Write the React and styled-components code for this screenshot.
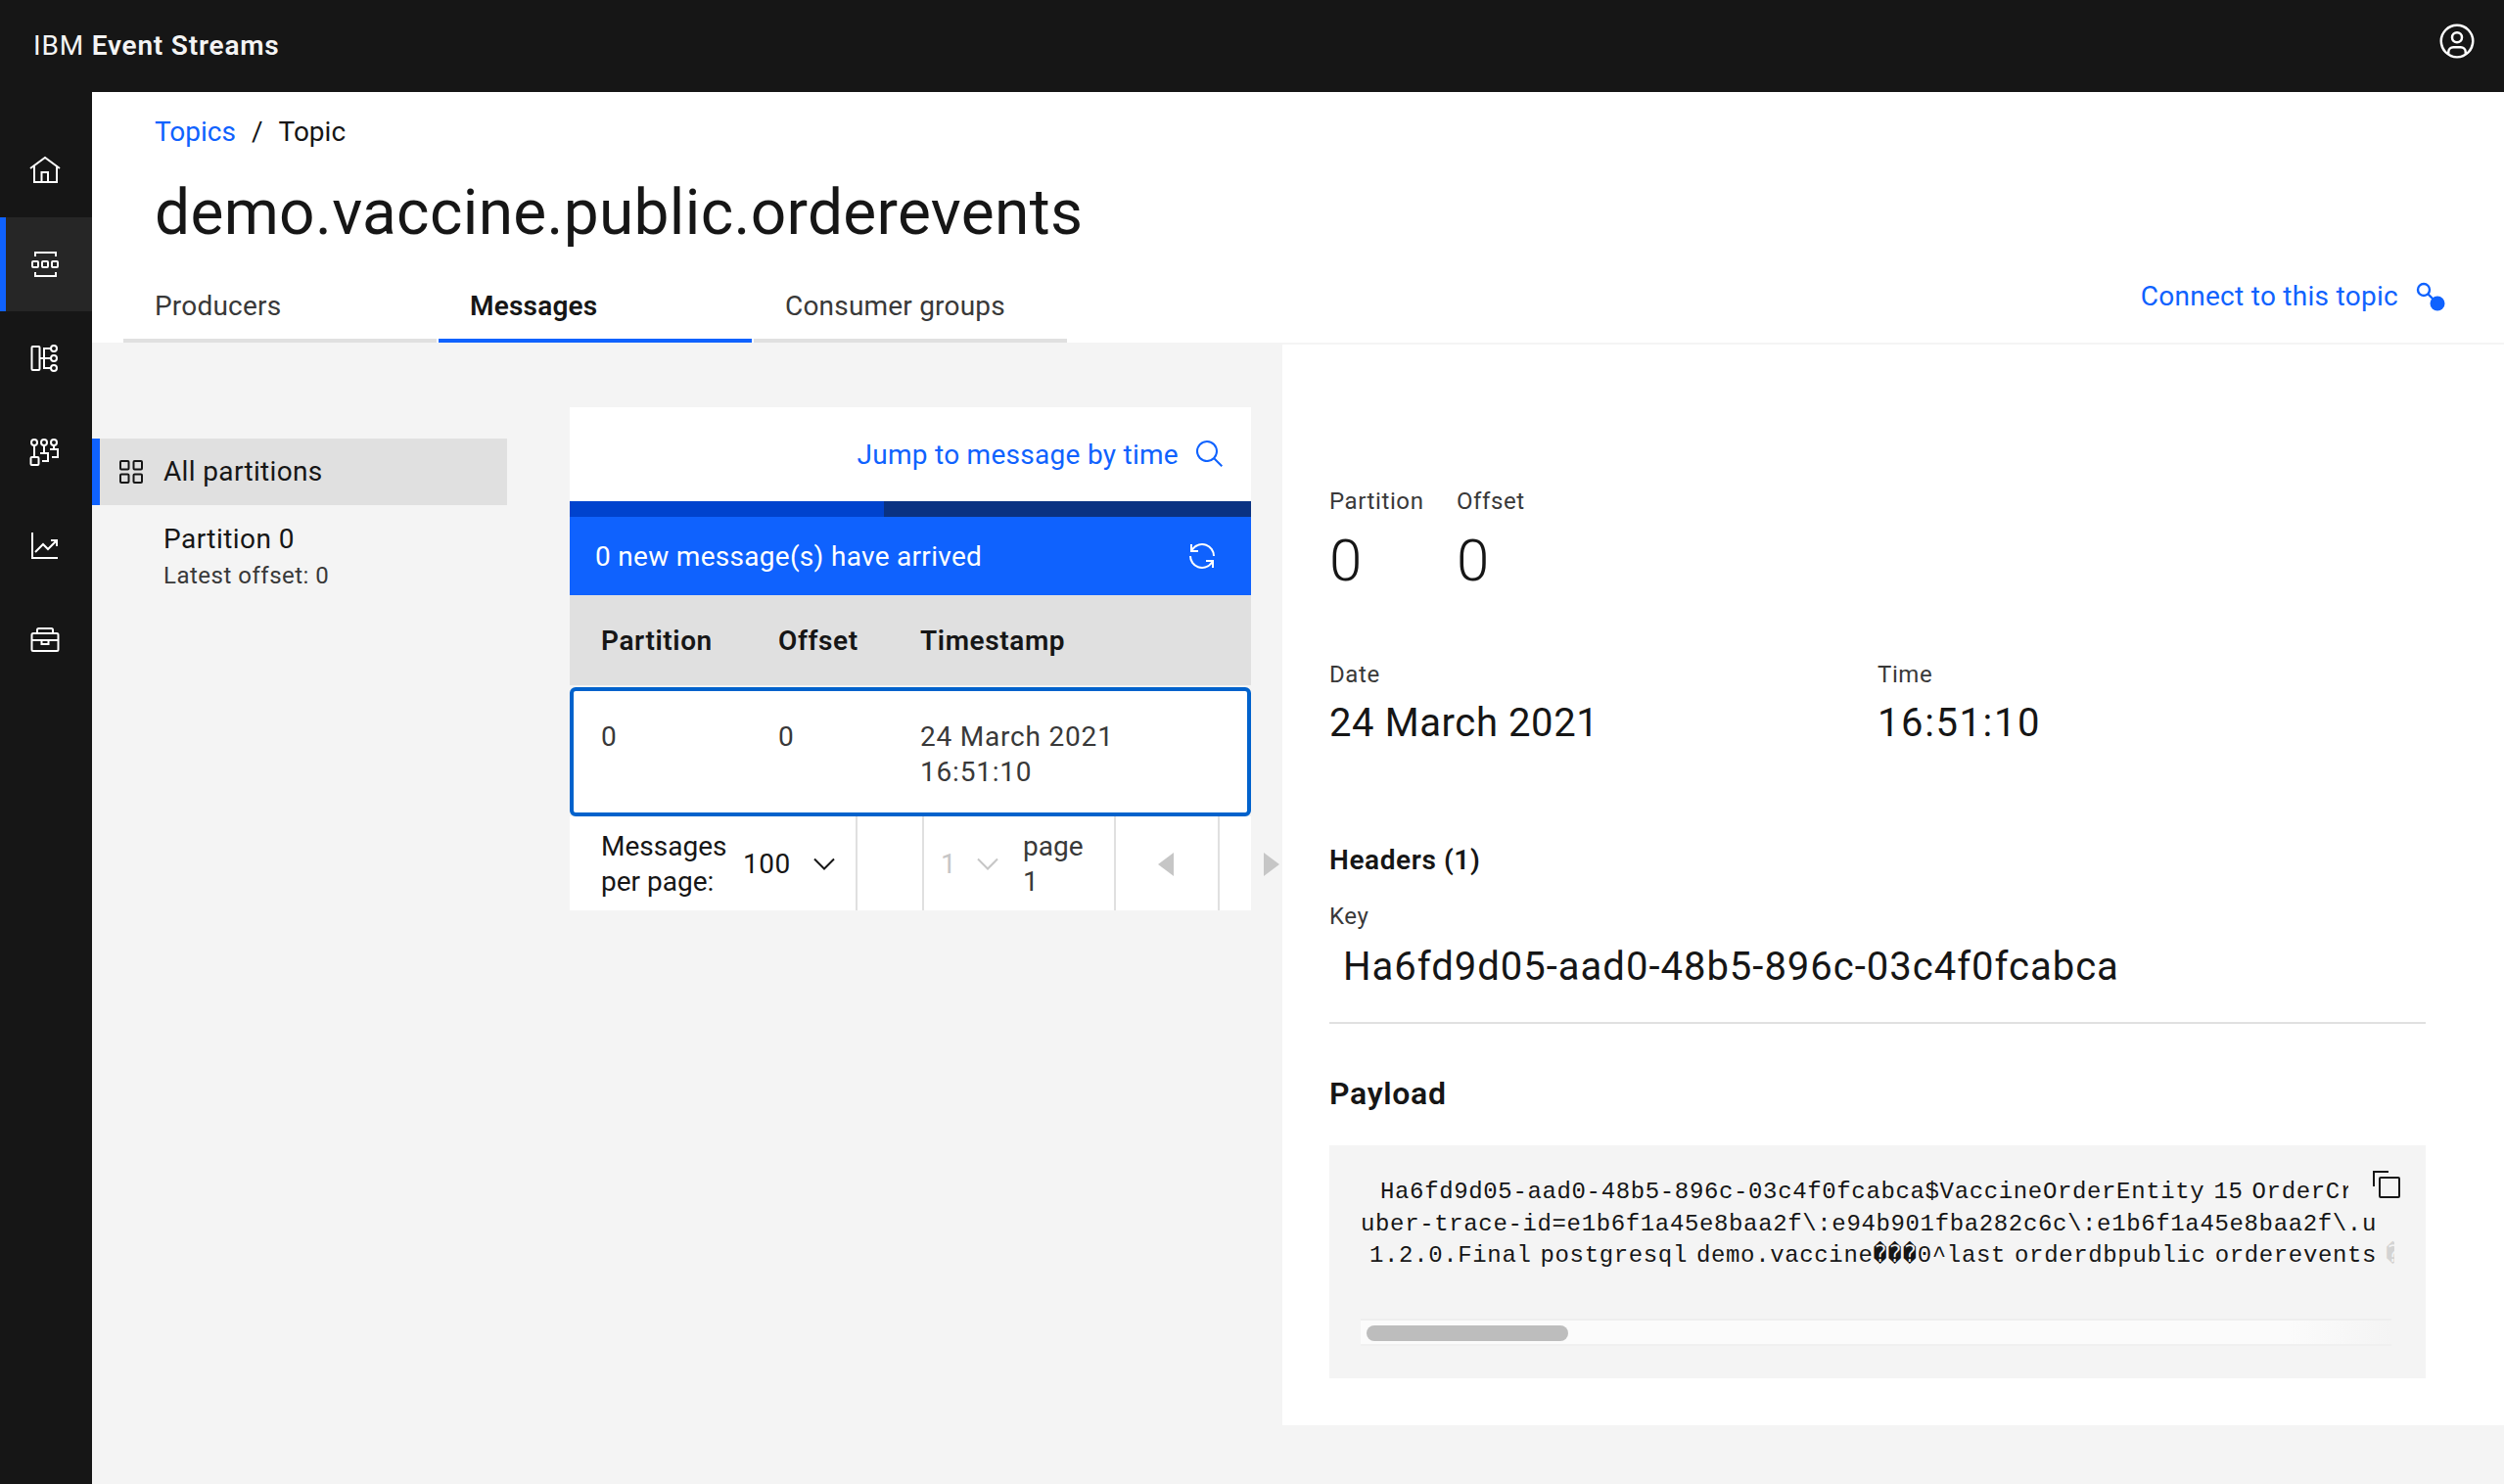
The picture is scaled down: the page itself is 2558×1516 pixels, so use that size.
import React from "react";
import styled, { createGlobalStyle } from "styled-components";

const Global = createGlobalStyle`
  html, body { margin: 0; padding: 0; background: #f4f4f4; }
  body { font-family: Roboto, "Noto Sans", sans-serif; color: #161616; overflow: hidden; }
  * { box-sizing: border-box; }
`;

const Page = styled.div`
  width: 2558px;
  height: 1516px;
  display: flex;
  flex-direction: column;
  overflow: hidden;
`;
const Header = styled.header`
  height: 94px;
  flex: none;
  background: #161616;
  color: #f4f4f4;
  display: flex;
  align-items: center;
  justify-content: space-between;
  padding: 0 28px 0 34px;
`;
const Brand = styled.div`
  font-size: 28px;
  line-height: 36px;
  letter-spacing: 0.8px;
  span { font-weight: 600; }
`;
const UserIcon = styled.svg`
  margin-bottom: 10px;
`;
const Body = styled.div`
  flex: 1;
  display: flex;
  min-height: 0;
`;
const SideNav = styled.nav`
  width: 94px;
  flex: none;
  background: #161616;
  padding-top: 32px;
`;
const NavItem = styled.div`
  height: 96px;
  display: flex;
  align-items: center;
  justify-content: center;
  color: #fff;
  background: ${(p) => (p.$active ? "#262626" : "transparent")};
  border-left: 6px solid ${(p) => (p.$active ? "#0f62fe" : "transparent")};
  padding-right: 8px;
`;
const Main = styled.main`
  flex: 1;
  min-width: 0;
  display: flex;
  flex-direction: column;
`;
const TitleArea = styled.section`
  height: 256px;
  flex: none;
  background: #fff;
  display: flex;
  flex-direction: column;
`;
const Breadcrumb = styled.div`
  margin: 23px 0 0 64px;
  font-size: 28px;
  line-height: 36px;
  display: flex;
  gap: 16px;
`;
const Crumb = styled.span`
  color: ${(p) => (p.$link ? "#0f62fe" : "#161616")};
`;
const Title = styled.h1`
  margin: 27px 0 0 64px;
  font-size: 64px;
  line-height: 76px;
  font-weight: 400;
  letter-spacing: 0.32px;
  color: #161616;
`;
const TabRow = styled.div`
  margin-top: auto;
  display: flex;
  justify-content: space-between;
  padding-left: 32px;
  padding-right: 60px;
`;
const Tabs = styled.div`
  display: flex;
  gap: 2px;
`;
const Tab = styled.div`
  width: ${(p) => p.$width}px;
  height: 70px;
  padding: 15px 0 0 32px;
  font-size: 28px;
  line-height: 36px;
  letter-spacing: 0.2px;
  font-weight: ${(p) => (p.$active ? 600 : 400)};
  color: ${(p) => (p.$active ? "#161616" : "#393939")};
  border-bottom: 4px solid ${(p) => (p.$active ? "#0f62fe" : "#e0e0e0")};
`;
const ConnectLink = styled.div`
  display: flex;
  align-items: center;
  gap: 18px;
  height: 36px;
  margin-top: 5px;
  color: #0f62fe;
  font-size: 28px;
  line-height: 36px;
  letter-spacing: 0.28px;
`;
const Content = styled.div`
  flex: 1;
  min-height: 0;
  display: flex;
  align-items: flex-start;
`;
const Partitions = styled.aside`
  width: 424px;
  flex: none;
  padding-top: 98px;
`;
const PartitionAll = styled.div`
  height: 68px;
  background: #e0e0e0;
  border-left: 8px solid #0f62fe;
  display: flex;
  align-items: center;
  gap: 21px;
  padding-left: 20px;
  font-size: 28px;
  line-height: 36px;
  letter-spacing: 0.35px;
`;
const PartitionItem = styled.div`
  padding: 17px 0 0 73px;
`;
const PartitionName = styled.div`
  font-size: 28px;
  line-height: 36px;
  letter-spacing: 0.45px;
`;
const PartitionMeta = styled.div`
  margin-top: 3px;
  font-size: 24px;
  line-height: 32px;
  letter-spacing: 0.5px;
  color: #393939;
`;
const Messages = styled.section`
  width: 696px;
  flex: none;
  margin: 66px 32px 0 64px;
`;
const JumpRow = styled.div`
  height: 96px;
  background: #fff;
  display: flex;
  align-items: center;
  justify-content: flex-end;
  gap: 16px;
  padding-right: 26px;
  color: #0f62fe;
  font-size: 28px;
  letter-spacing: 0.28px;
`;
const Progress = styled.div`
  height: 16px;
  display: flex;
`;
const ProgressPart = styled.div`
  width: ${(p) => p.$width}px;
  background: ${(p) => p.$color};
`;
const Banner = styled.div`
  height: 80px;
  background: #0f62fe;
  color: #fff;
  display: flex;
  align-items: center;
  justify-content: space-between;
  padding: 0 34px 0 26px;
  font-size: 28px;
  letter-spacing: 0.3px;
`;
const Row = styled.div`
  display: grid;
  grid-template-columns: 181px 145px 1fr;
  padding-left: 32px;
`;
const HeadRow = styled(Row)`
  height: 92px;
  background: #e0e0e0;
  align-items: center;
  font-size: 28px;
  font-weight: 600;
  letter-spacing: 0.6px;
  color: #161616;
`;
const SelectedRow = styled(Row)`
  height: 132px;
  margin-top: 2px;
  background: #fff;
  border: 4px solid #0062cc;
  border-radius: 6px;
  padding: 29px 0 0 28px;
  font-size: 28px;
  line-height: 36px;
  letter-spacing: 0.8px;
  color: #393939;
`;
const Pager = styled.div`
  height: 96px;
  display: flex;
  background: #fff;
  font-size: 28px;
  line-height: 36px;
`;
const PagerCell = styled.div`
  flex: none;
  width: ${(p) => p.$width}px;
  display: flex;
  align-items: center;
  border-right: ${(p) => (p.$last ? "0" : "2px solid #e0e0e0")};
  padding: 2px ${(p) => p.$padRight || 0}px 0 ${(p) => p.$pad || 0}px;
  justify-content: ${(p) => (p.$center ? "center" : "flex-start")};
`;
const PagerLabel = styled.div`
  width: ${(p) => p.$width}px;
  flex: none;
  margin-left: ${(p) => p.$gap || 0}px;
  color: ${(p) => p.$color || "#161616"};
`;
const PagerValue = styled.div`
  width: ${(p) => p.$width}px;
  flex: none;
  letter-spacing: 0.5px;
  color: ${(p) => (p.$disabled ? "#c6c6c6" : "#161616")};
`;
const Detail = styled.section`
  flex: none;
  width: 1248px;
  margin-top: 2px;
  height: 1104px;
  background: #fff;
  padding: 144px 80px 48px 48px;
`;
const FieldRow = styled.div`
  display: flex;
  margin-top: ${(p) => p.$top || 0}px;
`;
const Field = styled.div`
  width: ${(p) => p.$width}px;
  flex: none;
`;
const Label = styled.div`
  font-size: 24px;
  line-height: 32px;
  letter-spacing: 0.6px;
  color: #393939;
  margin-top: ${(p) => p.$top || 0}px;
`;
const BigValue = styled.div`
  margin-top: 9px;
  font-size: 60px;
  line-height: 72px;
  font-weight: 300;
  color: #161616;
`;
const Value = styled.div`
  margin-top: ${(p) => p.$gap}px;
  font-size: 40px;
  line-height: 52px;
  letter-spacing: ${(p) => p.$spacing}px;
  color: #161616;
  padding-left: ${(p) => p.$indent || 0}px;
`;
const SectionHead = styled.h3`
  margin: ${(p) => p.$top}px 0 0;
  font-size: 28px;
  line-height: 36px;
  font-weight: 600;
  letter-spacing: 0.6px;
  color: #161616;
`;
const Divider = styled.hr`
  margin: 30px 0 0;
  border: 0;
  height: 2px;
  background: #e0e0e0;
`;
const PayloadHead = styled.h2`
  margin: 49px 0 0;
  font-size: 32px;
  line-height: 44px;
  font-weight: 600;
  letter-spacing: 0.7px;
  color: #161616;
`;
const CodeBlock = styled.div`
  position: relative;
  margin-top: 31px;
  height: 238px;
  background: #f4f4f4;
  padding-top: 32px;
  font-family: "Liberation Mono", "DejaVu Sans Mono", monospace;
  font-size: 24px;
  line-height: 32.5px;
  letter-spacing: 0.64px;
  word-spacing: -6px;
  color: #161616;
`;
const CodeLine = styled.div`
  margin-left: ${(p) => p.$left}px;
  width: ${(p) => p.$width}px;
  height: 32.5px;
  overflow: hidden;
  white-space: pre;
`;
const FadedGlyph = styled.span`
  color: #c6c6c6;
  opacity: 0.7;
`;
const CopyButton = styled.div`
  position: absolute;
  top: 26px;
  right: 26px;
  width: 28px;
  height: 28px;
  line-height: 0;
`;
const ScrollTrack = styled.div`
  margin: 47.5px 0 0 32px;
  width: 1053px;
  height: 28px;
  background: linear-gradient(90deg, #fbfbfb 90%, #f4f4f4 100%);
  border-top: 2px solid #eeeeee;
  border-bottom: 2px solid #f0f0f0;
  padding: 5px 0 0 6px;
`;
const ScrollThumb = styled.div`
  width: 206px;
  height: 16px;
  border-radius: 8px;
  background: #bdbdbd;
`;

const Icon = ({ size = 32, vb = 32, children, ...rest }) => (
  <svg width={size} height={size} viewBox={`0 0 ${vb} ${vb}`} fill="none" stroke="currentColor" strokeWidth="2" {...rest}>
    {children}
  </svg>
);

const Chevron = ({ color }) => (
  <svg width="22" height="14" viewBox="0 0 22 14" fill="none" stroke={color} strokeWidth="2" style={{ flex: "none" }}>
    <path d="M1 1.5l10 10 10-10" />
  </svg>
);

const Triangle = ({ dir }) => (
  <svg width="16" height="24" viewBox="0 0 16 24" fill="#c6c6c6">
    <path d={dir === "left" ? "M16 0v24L0 12z" : "M0 0v24l16-12z"} />
  </svg>
);

export default function App() {
  return (
    <Page>
      <Global />
      <Header>
        <Brand>
          IBM <span>Event Streams</span>
        </Brand>
        <UserIcon width="40" height="40" viewBox="0 0 32 32" fill="#fff">
          <path d="M16 8a5 5 0 1 0 5 5 5 5 0 0 0-5-5zm0 8a3 3 0 1 1 3-3 3 3 0 0 1-3 3z" />
          <path d="M16 2a14 14 0 1 0 14 14A14 14 0 0 0 16 2zm-6 24.377V25a3 3 0 0 1 3-3h6a3 3 0 0 1 3 3v1.377a11.899 11.899 0 0 1-12 0zm13.992-1.451A5.002 5.002 0 0 0 19 20h-6a5.002 5.002 0 0 0-4.992 4.926 12 12 0 1 1 15.985 0z" />
        </UserIcon>
      </Header>
      <Body>
        <SideNav>
          <NavItem>
            <Icon>
              <path d="M1 14L16 3l15 11" />
              <path d="M5 11v17h23V11" />
              <path d="M12.5 28V18h6.5v10" />
            </Icon>
          </NavItem>
          <NavItem $active>
            <Icon>
              <path d="M6 8V4h21v4M6 24v4h21v-4" />
              <rect x="3" y="13" width="6" height="6" rx="1" />
              <rect x="13" y="13" width="6" height="6" rx="1" />
              <rect x="23" y="13" width="6" height="6" rx="1" />
            </Icon>
          </NavItem>
          <NavItem>
            <Icon>
              <rect x="2.5" y="4" width="8" height="24" rx="1" />
              <path d="M10.5 16H22M22 6h-7v20h7" />
              <circle cx="25" cy="6" r="3" />
              <circle cx="25" cy="16" r="3" />
              <circle cx="25" cy="26" r="3" />
            </Icon>
          </NavItem>
          <NavItem>
            <Icon>
              <circle cx="5" cy="6" r="3" />
              <circle cx="15" cy="6" r="3" />
              <circle cx="25" cy="6" r="3" />
              <rect x="1.5" y="21" width="8" height="8" rx="1" />
              <path d="M5 9v12M15 9v8M11 17h8v8h-6M25 9v4M21 13h8v8h-6" />
            </Icon>
          </NavItem>
          <NavItem>
            <Icon>
              <path d="M3 2v26h26" />
              <path d="M6 22l8-8 5 5 9-9M22 10h6v6" />
            </Icon>
          </NavItem>
          <NavItem>
            <Icon>
              <rect x="2.5" y="9" width="27" height="18" rx="1.5" />
              <path d="M8 9V5.5A1.5 1.5 0 0 1 9.5 4h13A1.5 1.5 0 0 1 24 5.5V9M2.5 16h27" />
              <rect x="12.5" y="16" width="7" height="4" />
            </Icon>
          </NavItem>
        </SideNav>
        <Main>
          <TitleArea>
            <Breadcrumb>
              <Crumb $link>Topics</Crumb>
              <Crumb>/</Crumb>
              <Crumb>Topic</Crumb>
            </Breadcrumb>
            <Title>demo.vaccine.public.orderevents</Title>
            <TabRow>
              <Tabs>
                <Tab $width={320}>Producers</Tab>
                <Tab $width={320} $active>Messages</Tab>
                <Tab $width={320}>Consumer groups</Tab>
              </Tabs>
              <ConnectLink>
                Connect to this topic
                <svg width="30" height="30" viewBox="0 0 30 30" fill="none" stroke="#0f62fe" strokeWidth="2.4">
                  <circle cx="8" cy="8" r="6" />
                  <path d="M12 12l6 6" />
                  <circle cx="22" cy="22" r="7.5" fill="#0f62fe" stroke="none" />
                </svg>
              </ConnectLink>
            </TabRow>
          </TitleArea>
          <Content>
            <Partitions>
              <PartitionAll>
                <svg width="24" height="24" viewBox="0 0 24 24" fill="none" stroke="#161616" strokeWidth="2">
                  <rect x="1" y="1" width="8.5" height="8.5" rx="1" />
                  <rect x="14.5" y="1" width="8.5" height="8.5" rx="1" />
                  <rect x="1" y="14.5" width="8.5" height="8.5" rx="1" />
                  <rect x="14.5" y="14.5" width="8.5" height="8.5" rx="1" />
                </svg>
                All partitions
              </PartitionAll>
              <PartitionItem>
                <PartitionName>Partition 0</PartitionName>
                <PartitionMeta>Latest offset: 0</PartitionMeta>
              </PartitionItem>
            </Partitions>
            <Messages>
              <JumpRow>
                Jump to message by time
                <svg width="32" height="32" viewBox="0 0 32 32" fill="#0f62fe">
                  <path d="M29 27.586l-7.552-7.552a11.018 11.018 0 1 0-1.414 1.414L27.586 29zM4 13a9 9 0 1 1 9 9 9.01 9.01 0 0 1-9-9z" />
                </svg>
              </JumpRow>
              <Progress>
                <ProgressPart $width={321} $color="#0043ce" />
                <ProgressPart $width={375} $color="#0a3282" />
              </Progress>
              <Banner>
                0 new message(s) have arrived
                <svg width="32" height="32" viewBox="0 0 32 32" fill="#fff">
                  <path d="M12 10H6.78A11 11 0 0 1 27 16h2A13 13 0 0 0 6 7.68V4H4v8h8z" />
                  <path d="M20 22h5.22A11 11 0 0 1 5 16H3a13 13 0 0 0 23 8.32V28h2v-8h-8z" />
                </svg>
              </Banner>
              <HeadRow>
                <div>Partition</div>
                <div>Offset</div>
                <div>Timestamp</div>
              </HeadRow>
              <SelectedRow>
                <div>0</div>
                <div>0</div>
                <div>24 March 2021<br />16:51:10</div>
              </SelectedRow>
              <Pager>
                <PagerCell $width={294} $pad={32}>
                  <PagerLabel $width={145}>Messages per page:</PagerLabel>
                  <PagerValue $width={72}>100</PagerValue>
                  <Chevron color="#161616" />
                </PagerCell>
                <PagerCell $width={68} />
                <PagerCell $width={196} $pad={17}>
                  <PagerValue $width={37} $disabled>1</PagerValue>
                  <Chevron color="#c6c6c6" />
                  <PagerLabel $width={70} $gap={25} $color="#393939">page 1</PagerLabel>
                </PagerCell>
                <PagerCell $width={106} $center $padRight={2}>
                  <Triangle dir="left" />
                </PagerCell>
                <PagerCell $width={106} $center $last>
                  <Triangle dir="right" />
                </PagerCell>
              </Pager>
            </Messages>
            <Detail>
              <FieldRow>
                <Field $width={130}>
                  <Label>Partition</Label>
                  <BigValue>0</BigValue>
                </Field>
                <Field $width={130}>
                  <Label>Offset</Label>
                  <BigValue>0</BigValue>
                </Field>
              </FieldRow>
              <FieldRow $top={64}>
                <Field $width={560}>
                  <Label>Date</Label>
                  <Value $gap={8} $spacing={0.6}>24 March 2021</Value>
                </Field>
                <Field $width={400}>
                  <Label>Time</Label>
                  <Value $gap={8} $spacing={1.6}>16:51:10</Value>
                </Field>
              </FieldRow>
              <SectionHead $top={96}>Headers (1)</SectionHead>
              <Label $top={23}>Key</Label>
              <Value $gap={10} $indent={14} $spacing={1}>Ha6fd9d05-aad0-48b5-896c-03c4f0fcabca</Value>
              <Divider />
              <PayloadHead>Payload</PayloadHead>
              <CodeBlock>
                <CopyButton>
                  <svg width="28" height="28" viewBox="0 0 28 28" fill="none" stroke="#161616" strokeWidth="2">
                    <path d="M1 16V1h15" />
                    <rect x="7" y="7" width="20" height="20" rx="1" />
                  </svg>
                </CopyButton>
                <CodeLine $left={52} $width={989}>Ha6fd9d05-aad0-48b5-896c-03c4f0fcabca$VaccineOrderEntity 15 OrderCr</CodeLine>
                <CodeLine $left={32} $width={1036}>uber-trace-id=e1b6f1a45e8baa2f\:e94b901fba282c6c\:e1b6f1a45e8baa2f\.u</CodeLine>
                <CodeLine $left={41} $width={1047}>1.2.0.Final postgresql demo.vaccine���0^last orderdbpublic orderevents <FadedGlyph>�</FadedGlyph></CodeLine>
                <ScrollTrack>
                  <ScrollThumb />
                </ScrollTrack>
              </CodeBlock>
            </Detail>
          </Content>
        </Main>
      </Body>
    </Page>
  );
}
